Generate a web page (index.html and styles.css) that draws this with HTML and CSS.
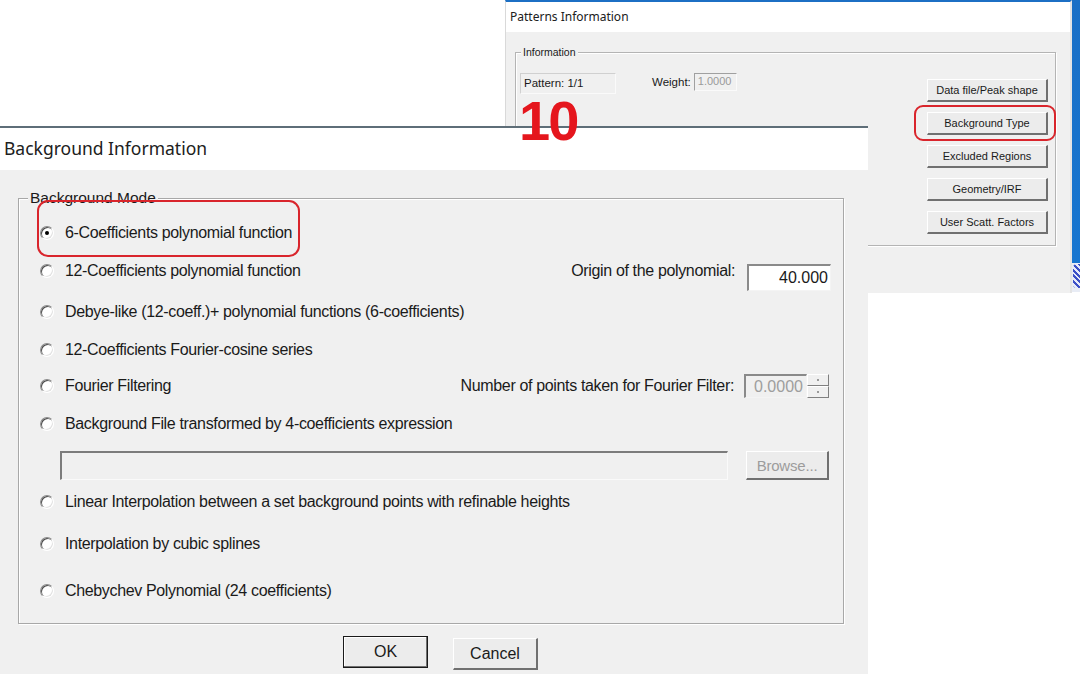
FILE: index.html
```html
<!DOCTYPE html>
<html>

<head>
    <title>Background Information</title>
    <meta charset="UTF-8">
    <link rel="stylesheet" href="styles.css">
</head>

<body>
    <div class="desk">
        <!-- Parent dialog, partly hidden behind the background one. -->
        <section class="win patterns">
            <header class="titlebar titlebar-small">Patterns Information</header>
            <div class="client">
                <div class="group info">
                    <span class="group-label">Information</span>
                    <div class="info-left">
                        <span class="readout">Pattern: 1/1</span>
                        <span class="weight">Weight:<span class="edit edit-weight">1.0000</span></span>
                    </div>
                    <div class="btn-col">
                        <button class="btn btn-small">Data file/Peak shape</button>
                        <button class="btn btn-small">Background Type</button>
                        <button class="btn btn-small">Excluded Regions</button>
                        <button class="btn btn-small">Geometry/IRF</button>
                        <button class="btn btn-small">User Scatt. Factors</button>
                    </div>
                </div>
            </div>
        </section>

        <!-- Sliver of desktop on the right. -->
        <div class="strip">
            <div class="strip-icon"></div>
        </div>

        <section class="win bginfo">
            <header class="titlebar">Background Information</header>
            <div class="client client-big">
                <div class="group mode">
                    <span class="group-label group-label-big">Background Mode</span>
                    <div class="opt">
                        <span class="radio checked"></span>
                        <span class="opt-text">6-Coefficients polynomial function</span>
                    </div>
                    <div class="opt">
                        <span class="radio"></span>
                        <span class="opt-text">12-Coefficients polynomial function</span>
                        <span class="extra">Origin of the polynomial:<span class="edit edit-origin">40.000</span></span>
                    </div>
                    <div class="opt">
                        <span class="radio"></span>
                        <span class="opt-text">Debye-like (12-coeff.)+ polynomial functions (6-coefficients)</span>
                    </div>
                    <div class="opt">
                        <span class="radio"></span>
                        <span class="opt-text">12-Coefficients Fourier-cosine series</span>
                    </div>
                    <div class="opt">
                        <span class="radio"></span>
                        <span class="opt-text">Fourier Filtering</span>
                        <span class="extra extra-spin">Number of points taken for Fourier Filter:<span
                                class="edit edit-spin">0.0000</span><span class="spin"><span
                                    class="spin-up"></span><span class="spin-down"></span></span></span>
                    </div>
                    <div class="opt">
                        <span class="radio"></span>
                        <span class="opt-text">Background File transformed by 4-coefficients expression</span>
                    </div>
                    <div class="file-row">
                        <span class="edit edit-file"></span>
                        <button class="btn btn-browse" disabled>Browse...</button>
                    </div>
                    <div class="opt">
                        <span class="radio"></span>
                        <span class="opt-text">Linear Interpolation between a set background points with refinable heights</span>
                    </div>
                    <div class="opt">
                        <span class="radio"></span>
                        <span class="opt-text">Interpolation by cubic splines</span>
                    </div>
                    <div class="opt">
                        <span class="radio"></span>
                        <span class="opt-text">Chebychev Polynomial (24 coefficients)</span>
                    </div>
                </div>
                <div class="actions">
                    <button class="btn btn-big btn-default">OK</button>
                    <button class="btn btn-big btn-cancel">Cancel</button>
                </div>
            </div>
        </section>

        <!-- Tutorial annotations drawn on top of the screenshot. -->
        <div class="mark step">10</div>
        <div class="mark ring ring-type"></div>
        <div class="mark ring ring-coef"></div>
    </div>
</body>

</html>
```

FILE: styles.css
```css
body {
    margin: 0;
    background: #FFFFFF;
    /* Closest thing to MS Sans Serif we have. */
    font-family: "Liberation Sans", Arial, sans-serif;
    color: #1A1A1A;
}

.desk {
    position: relative;
    width: 1080px;
    height: 674px;
    overflow: hidden;
    background: #FFFFFF;
}

.win {
    position: absolute;
    display: flex;
    flex-direction: column;
    box-sizing: border-box;
}

.titlebar {
    background: #FFFFFF;
    font-family: "Noto Sans", "Open Sans", sans-serif;
    color: #202020;
    flex: none;
}

.client {
    flex: 1;
    background: #F0F0F0;
}

/* ---------- Patterns Information ---------- */

.patterns {
    left: 505px;
    top: 0;
    width: 567px;
    height: 293px;
    border-top: 2px solid #1C6FC4;
    border-left: 1px solid #D9D9D9;
    border-right: 2px solid #E4E4E4;
}

.titlebar-small {
    height: 30px;
    line-height: 30px;
    padding-left: 4px;
    font-size: 12px;
}

.patterns .client {
    padding: 20px 0 0 9px;
}

.group {
    position: relative;
    box-sizing: border-box;
    border: 1px solid #B4B4B4;
    box-shadow: 1px 1px 0 #FFFFFF, inset 1px 1px 0 #FFFFFF;
}

.group-label {
    position: absolute;
    left: 5px;
    top: -8px;
    padding: 0 2px;
    background: #F0F0F0;
    font-size: 10.5px;
    line-height: 14px;
}

.info {
    width: 541px;
    height: 194px;
    display: flex;
    justify-content: space-between;
    padding: 20px 7px 0 4px;
}

.info-left {
    display: flex;
    align-items: flex-start;
    font-size: 11.5px;
}

.readout {
    box-sizing: border-box;
    width: 96px;
    height: 21px;
    line-height: 18px;
    padding: 0 0 1px 3px;
    border: 1px solid #D0D0D0;
    border-right-color: #FAFAFA;
    border-bottom-color: #FAFAFA;
}

.weight {
    display: flex;
    align-items: flex-start;
    margin-left: 36px;
    line-height: 18px;
}

.edit {
    box-sizing: border-box;
    background: #FFFFFF;
    border-style: solid;
    border-width: 2px 1px 1px 2px;
    border-color: #8A8A8A #F4F4F4 #F4F4F4 #8A8A8A;
}

.edit-weight {
    width: 43px;
    height: 18px;
    margin-left: 3px;
    padding-left: 3px;
    background: #F0F0F0;
    color: #9A9A9A;
    font-size: 11px;
    line-height: 14px;
    border-width: 1px;
    border-color: #A0A0A0 #FAFAFA #FAFAFA #A0A0A0;
}

.btn-col {
    display: flex;
    flex-direction: column;
    gap: 10px;
    margin-top: 6px;
}

.btn {
    box-sizing: border-box;
    padding: 0;
    background: #ECECEC;
    color: #1A1A1A;
    font-family: "Liberation Sans", Arial, sans-serif;
    border-style: solid;
    border-width: 1px 2px 2px 1px;
    border-color: #FFFFFF #707070 #707070 #FFFFFF;
}

.btn-small {
    width: 121px;
    height: 23px;
    font-size: 11px;
}

/* ---------- Desktop sliver ---------- */

.strip {
    position: absolute;
    left: 1072px;
    top: 0;
    width: 8px;
    height: 292px;
    background: linear-gradient(#1A6FC6, #1675D0 90%, #E8ECF5 90%);
}

.strip-icon {
    position: absolute;
    top: 264px;
    left: 1px;
    width: 7px;
    height: 24px;
    border-radius: 4px 0 0 4px;
    background: repeating-linear-gradient(45deg, #3B4FC7 0 2px, #E6E9F8 2px 4px);
}

/* ---------- Background Information ---------- */

.bginfo {
    left: 0;
    top: 126px;
    width: 868px;
    height: 548px;
    border-top: 2px solid #5E6E78;
}

.bginfo .titlebar {
    height: 42px;
    line-height: 40px;
    padding-left: 4px;
    font-size: 17.5px;
}

.client-big {
    padding: 28px 0 0 18px;
}

.mode {
    width: 826px;
    height: 426px;
    display: grid;
    grid-template-rows: 38px 38px 44px 32px 40px 36px 47px 26px 58px 36px;
    align-items: center;
    padding: 15px 12px 0 21px;
    border-color: #A8A8A8;
}

.group-label-big {
    left: 9px;
    top: -10px;
    font-size: 15.5px;
    line-height: 18px;
}

.opt {
    display: flex;
    align-items: center;
    font-size: 16px;
    letter-spacing: -0.35px;
}

.opt-text {
    margin-left: 11px;
}

/* Windows classic, sunken radio button. */
.radio {
    position: relative;
    flex: none;
    box-sizing: border-box;
    width: 14px;
    height: 14px;
    border-radius: 50%;
    background: #FFFFFF;
    border: 1px solid;
    border-color: #8C8C8C #FFFFFF #FFFFFF #8C8C8C;
    box-shadow: inset 1px 1px 0 #4A4A4A, inset -1px -1px 0 #E2E2E2;
}

.radio.checked::after {
    content: "";
    position: absolute;
    left: 4px;
    top: 4px;
    width: 4px;
    height: 4px;
    border-radius: 50%;
    background: #000000;
}

.extra {
    display: flex;
    align-items: center;
    margin-left: auto;
}

.edit-origin {
    width: 84px;
    height: 27px;
    margin: 12px 0 0 12px;
    padding-right: 2px;
    text-align: right;
    line-height: 24px;
    letter-spacing: 0;
}

.extra-spin {
    margin-right: 2px;
}

.edit-spin {
    width: 63px;
    height: 24px;
    margin-left: 10px;
    padding-left: 8px;
    background: #F0F0F0;
    color: #9E9E9E;
    line-height: 21px;
    letter-spacing: 0;
}

.spin {
    display: flex;
    flex-direction: column;
    width: 22px;
    height: 24px;
}

.spin-up,
.spin-down {
    position: relative;
    flex: 1;
    box-sizing: border-box;
    border-style: solid;
    border-width: 1px 1px 1px 1px;
    border-color: #FFFFFF #808080 #808080 #FFFFFF;
}

.spin-up::after,
.spin-down::after {
    content: "";
    position: absolute;
    left: 9px;
    top: 4px;
    width: 2px;
    height: 2px;
    background: #9A9A9A;
}

.file-row {
    display: flex;
    align-items: center;
    justify-content: space-between;
    padding: 0 2px 0 20px;
}

.edit-file {
    width: 668px;
    height: 29px;
    background: #F0F0F0;
    border-color: #7C7C7C #FAFAFA #FAFAFA #7C7C7C;
}

.btn-browse {
    width: 83px;
    height: 29px;
    font-size: 15px;
    color: #9C9C9C;
    letter-spacing: -0.2px;
}

.actions {
    display: flex;
    align-items: flex-start;
    gap: 25px;
    padding: 12px 0 0 325px;
}

.btn-big {
    width: 85px;
    height: 32px;
    font-size: 16px;
}

.btn-default {
    border: 1px solid #1A1A1A;
    box-shadow: inset -1px -1px 0 #707070, inset 1px 1px 0 #FFFFFF;
}

.btn-cancel {
    margin-top: 2px;
}

/* ---------- Annotations ---------- */

.mark {
    position: absolute;
}

.step {
    left: 519px;
    top: 93px;
    color: #E5161D;
    font-family: "Liberation Sans", Arial, sans-serif;
    font-weight: 700;
    font-size: 56px;
    line-height: 1;
    letter-spacing: -2px;
}

.ring {
    box-sizing: border-box;
    border: 2px solid #D9252C;
    border-radius: 9px;
}

.ring-type {
    left: 914px;
    top: 105px;
    width: 142px;
    height: 36px;
}

.ring-coef {
    left: 37px;
    top: 200px;
    width: 263px;
    height: 57px;
    border-radius: 11px;
}
```
